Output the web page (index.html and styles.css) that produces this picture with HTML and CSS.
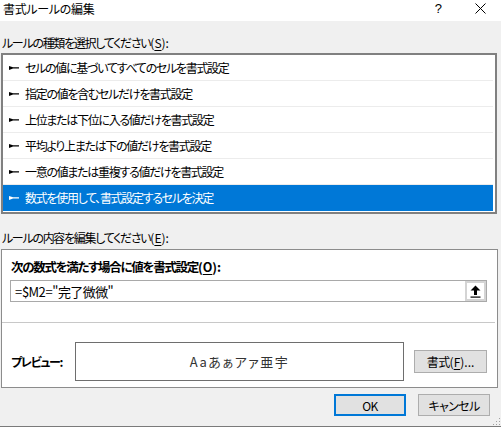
FILE: index.html
```html
<!DOCTYPE html>
<html lang="ja">
<head>
    <meta charset="UTF-8">
    <title>書式ルールの編集</title>
    <link rel="stylesheet" href="styles.css">
</head>
<body>
    <div class="window">
        <div class="titlebar">
            <span class="title">書式ルールの編集</span>
            <span class="help">?</span>
            <svg class="close" width="11" height="11" viewBox="0 0 11 11"><path d="M0.5 0.5 L10.5 10.5 M10.5 0.5 L0.5 10.5" stroke="#000" stroke-width="1"/></svg>
        </div>

        <div class="content">
            <div class="label first">ルールの種類を選択してください<span class="key">(<u>S</u>):</span></div>
            <div class="rule-list">
                <div class="rule"><svg class="bullet" width="10" height="4" viewBox="0 0 10 4"><path d="M0 0 L4 1.2 L10 1.2 L10 2.6 L4 2.6 L0 4 Z"/></svg>セルの値に基づいてすべてのセルを書式設定</div>
                <div class="rule"><svg class="bullet" width="10" height="4" viewBox="0 0 10 4"><path d="M0 0 L4 1.2 L10 1.2 L10 2.6 L4 2.6 L0 4 Z"/></svg>指定の値を含むセルだけを書式設定</div>
                <div class="rule"><svg class="bullet" width="10" height="4" viewBox="0 0 10 4"><path d="M0 0 L4 1.2 L10 1.2 L10 2.6 L4 2.6 L0 4 Z"/></svg>上位または下位に入る値だけを書式設定</div>
                <div class="rule"><svg class="bullet" width="10" height="4" viewBox="0 0 10 4"><path d="M0 0 L4 1.2 L10 1.2 L10 2.6 L4 2.6 L0 4 Z"/></svg>平均より上または下の値だけを書式設定</div>
                <div class="rule"><svg class="bullet" width="10" height="4" viewBox="0 0 10 4"><path d="M0 0 L4 1.2 L10 1.2 L10 2.6 L4 2.6 L0 4 Z"/></svg>一意の値または重複する値だけを書式設定</div>
                <div class="rule selected"><svg class="bullet" width="10" height="4" viewBox="0 0 10 4"><path d="M0 0 L4 1.2 L10 1.2 L10 2.6 L4 2.6 L0 4 Z"/></svg>数式を使用して、書式設定するセルを決定</div>
            </div>

            <div class="label second">ルールの内容を編集してください<span class="key">(<u>E</u>):</span></div>
            <div class="rule-box">
                <div class="formula-label">次の数式を満たす場合に値を書式設定<span class="key">(<u>O</u>):</span></div>
                <div class="formula-input">
                    <span class="formula-text">= $M2 = "完了微微"</span>
                    <span class="ref-button">
                        <svg width="11" height="13" viewBox="0 0 11 13"><path d="M5.5 0.5 L10.5 5.5 L7 5.5 L7 10 L4 10 L4 5.5 L0.5 5.5 Z" fill="#000"/><rect x="0.5" y="11.5" width="10" height="1.2" fill="#000"/></svg>
                    </span>
                </div>
                <div class="divider"></div>
                <div class="preview-row">
                    <span class="preview-label">プレビュー:</span>
                    <div class="preview-box">Aaあぁアァ亜宇</div>
                    <button class="btn format-btn">書式<span class="key">(<u>F</u>)...</span></button>
                </div>
            </div>

            <div class="actions">
                <button class="btn ok-btn">OK</button>
                <button class="btn">キャンセル</button>
            </div>
        </div>
        <svg class="grip" width="10" height="10" viewBox="0 0 10 10">
            <rect x="8" y="2" width="1" height="1" fill="#a0a0a0"/>
            <rect x="5" y="5" width="1" height="1" fill="#a0a0a0"/>
            <rect x="8" y="5" width="1" height="1" fill="#a0a0a0"/>
            <rect x="2" y="8" width="1" height="1" fill="#a0a0a0"/>
            <rect x="5" y="8" width="1" height="1" fill="#a0a0a0"/>
            <rect x="8" y="8" width="1" height="1" fill="#a0a0a0"/>
        </svg>
    </div>
</body>
</html>
```

FILE: styles.css
```css
body {
    margin: 0;
    padding: 0;
    font-family: "Noto Sans CJK JP", "Noto Sans", sans-serif;
    font-size: 12px;
    color: #000;
    background-color: #f0f0f0;
}
u {
    text-decoration: underline;
    text-underline-offset: 2px;
}
.key {
    letter-spacing: 0;
}
.window {
    position: relative;
    width: 501px;
    height: 426px;
    background-color: #f0f0f0;
    border-bottom: 1px solid #7a7a7a;
    font-feature-settings: "palt";
    letter-spacing: -1.3px;
}
.titlebar {
    display: flex;
    align-items: center;
    height: 21px;
    background-color: #fff;
    padding-left: 3px;
    padding-bottom: 4px;
    box-sizing: border-box;
}
.title {
    flex: 1;
    font-size: 12px;
    letter-spacing: -0.3px;
}
.help {
    font-family: "Liberation Sans", sans-serif;
    font-size: 13px;
    margin-right: 33px;
    letter-spacing: 0;
}
.close {
    margin-right: 15px;
}
.content {
    display: flex;
    flex-direction: column;
}
.label {
    line-height: 16px;
    height: 16px;
    padding-left: 2px;
    font-size: 12px;
}
.label.first {
    margin-top: 14px;
}
.label.second {
    margin-top: 16px;
}
.rule-list {
    margin-top: 2px;
    margin-left: 1px;
    width: 496px;
    box-sizing: border-box;
    border: 2px solid #808080;
    background-color: #fff;
    padding-bottom: 1px;
}
.rule {
    display: flex;
    align-items: center;
    height: 25px;
    border-bottom: 1px solid #ececec;
    margin-right: 2px;
    font-size: 12px;
    padding-left: 6px;
}
.rule .bullet {
    fill: #000;
    margin-right: 6px;
}
.rule.selected {
    background-color: #0078d7;
    color: #fff;
    border-bottom-color: #0078d7;
}
.rule.selected .bullet {
    fill: #fff;
}
.rule-box {
    margin-top: 3px;
    margin-left: 1px;
    width: 497px;
    height: 139px;
    box-sizing: border-box;
    border: 1px solid #8c8c8c;
    background-color: #fff;
    padding: 9px 10px 0 8px;
}
.formula-label {
    font-weight: bold;
    line-height: 16px;
    height: 16px;
    font-size: 12.5px;
    padding-left: 1px;
    letter-spacing: -1.3px;
}
.formula-input {
    display: flex;
    align-items: center;
    margin-top: 5px;
    height: 22px;
    box-sizing: border-box;
    border: 1px solid #a9a9a9;
}
.formula-text {
    flex: 1;
    padding-left: 4px;
    font-size: 13px;
    letter-spacing: -0.6px;
    word-spacing: -2px;
}
.ref-button {
    display: flex;
    align-items: center;
    justify-content: center;
    width: 21px;
    height: 20px;
    box-sizing: border-box;
    background-color: #fff;
    border: 2px solid #d4d4d4;
}
.divider {
    margin-top: 20px;
    margin-left: -8px;
    margin-right: -8px;
    height: 1px;
    background-color: #c8c8c8;
}
.preview-row {
    display: flex;
    align-items: center;
    margin-top: 19px;
}
.preview-label {
    width: 64px;
    padding-left: 1px;
    font-weight: bold;
    font-size: 12px;
}
.preview-box {
    width: 330px;
    height: 39px;
    box-sizing: border-box;
    border: 1px solid #6e6e6e;
    display: flex;
    align-items: center;
    justify-content: center;
    font-size: 13px;
    letter-spacing: 1.5px;
    color: #333;
}
.btn {
    font-family: "Noto Sans CJK JP", "Noto Sans", sans-serif;
    font-size: 12px;
    font-feature-settings: "palt";
    letter-spacing: -0.6px;
    background-color: #e1e1e1;
    border: 1px solid #adadad;
    height: 22px;
    width: 72px;
    padding: 0;
    color: #000;
}
.format-btn {
    margin-left: 10px;
    width: 73px;
    height: 23px;
}
.actions {
    display: flex;
    justify-content: flex-end;
    gap: 12px;
    margin-top: 6px;
    padding-right: 11px;
}
.ok-btn {
    border: 2px solid #0078d7;
}
.grip {
    position: absolute;
    right: 0;
    bottom: 0;
}
```
